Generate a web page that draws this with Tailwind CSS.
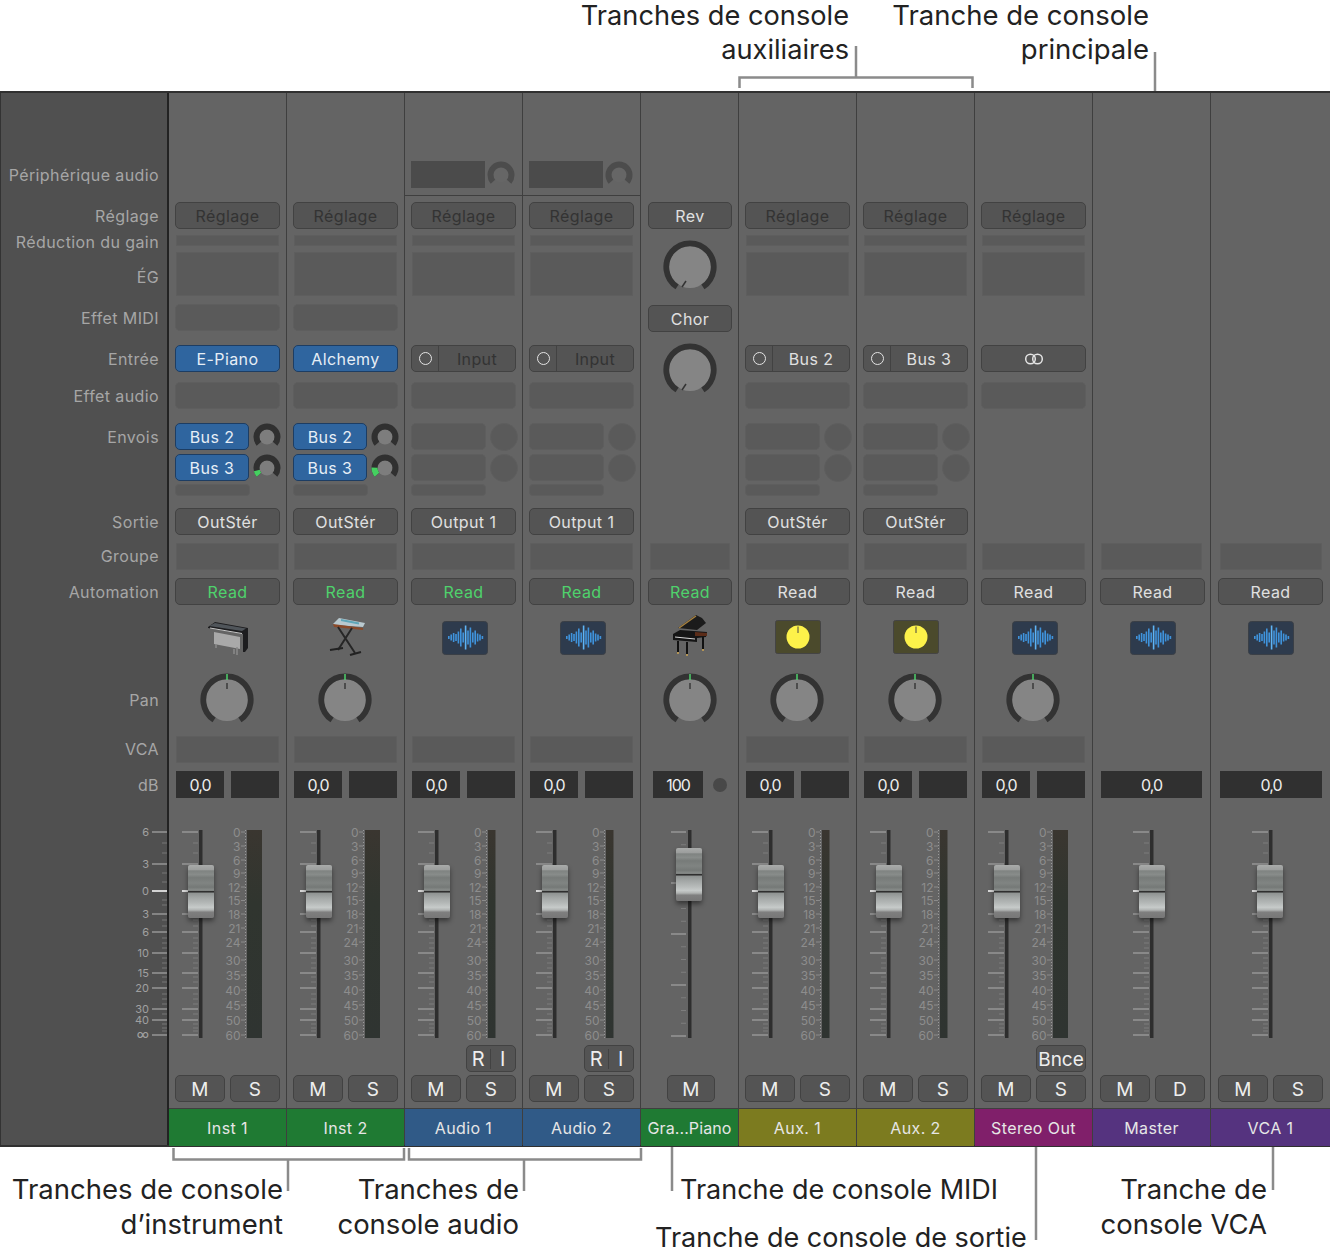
<!DOCTYPE html>
<html lang="fr">
<head>
  <meta charset="UTF-8">
  <title>Table de mixage</title>
  <script src="https://cdn.jsdelivr.net/npm/@tailwindcss/browser@4"></script>
</head>
<body class="bg-white font-[Inter,sans-serif] overflow-hidden">
<div class="relative w-[1330px] h-[1256px] overflow-hidden">

  <!-- Callouts above the mixer -->
  <div class="h-[91px]"></div>

  <!-- Mixer -->
  <div id="mixer" class="flex h-[1056px] bg-[#646464] border-t-2 border-b-2 border-[#303030] text-[16px] leading-none tracking-[0.4px]"></div>

  <!-- Callouts: text -->
  <p class="absolute right-[481px] top-[-1.5px] text-right text-[27.2px] leading-[34.5px] text-[#222]">Tranches de console<br>auxiliaires</p>
  <p class="absolute right-[181px] top-[-2.5px] text-right text-[27.5px] leading-[34.5px] text-[#222]">Tranche de console<br>principale</p>
  <p class="absolute right-[1047px] top-[1172px] text-right text-[27.5px] leading-[34.5px] text-[#222]">Tranches de console<br>d’instrument</p>
  <p class="absolute right-[811px] top-[1172px] text-right text-[27.5px] leading-[34.5px] text-[#222]">Tranches de<br>console audio</p>
  <p class="absolute left-[680px] top-[1173px] text-[27px] leading-[34.5px] text-[#222]">Tranche de console MIDI</p>
  <p class="absolute left-[655px] top-[1221px] text-[27px] leading-[34.5px] text-[#222]">Tranche de console de sortie</p>
  <p class="absolute right-[63px] top-[1172px] text-right text-[27.5px] leading-[34.5px] text-[#222]">Tranche de<br>console VCA</p>

  <!-- Callouts: leader lines -->
  <svg class="absolute left-0 top-0 pointer-events-none" width="1330" height="1256" fill="none" stroke="#8b8b8b" stroke-width="2.5">
    <path d="M739.5 88V77.5H972.5V88M856 77.5V46"/>
    <path d="M1155 52V91"/>
    <path d="M173.5 1148V1159.5H404V1148M288 1159.5V1191"/>
    <path d="M409 1148V1159.5H641V1148M524 1159.5V1191"/>
    <path d="M672 1147V1191"/>
    <path d="M1036 1147V1240"/>
    <path d="M1273 1147V1190"/>
  </svg>
</div>

<script>
  const ROWS = 'grid grid-rows-[109px_33px_17px_52px_41px_37px_41px_31px_30px_24px_35px_35px_37px_58px_63px_35px_59px_215px_30px_33px_38px]';
  const BTN = 'flex items-center justify-center h-[27px] rounded-[5px] bg-[#545454] border border-[#424242]';
  const BLUE = 'flex items-center justify-center h-[27px] rounded-[5px] bg-[#2f659f] border border-[#1d3d63] text-[#e6eef6]';
  const WELL = 'h-[27px] rounded-[1px] bg-[#5a5a5a] border border-[#5e5e5e]';
  const PAD = 'h-[27px] rounded-[5px] bg-[#5a5a5a] border border-[#5e5e5e]';
  const CAP = 'absolute w-[26px] h-[53px] rounded-[2px] shadow-[0_3px_5px_rgba(0,0,0,0.45)] bg-[linear-gradient(180deg,#a9abaa_0%,#9c9e9d_9%,#7f8381_11%,#888c8a_18%,#777b79_24%,#808482_34%,#757977_42%,#8a8e8c_48%,#2f2f2f_49%,#2f2f2f_51%,#8f9392_53%,#a3a7a6_62%,#b5b9b8_72%,#c6cac9_80%,#b0b3b2_85%,#7f7f7f_89%,#777_100%)]';

  const METER_TICKS = [['0',2],['3',16],['6',30],['9',43],['12',57],['15',70.5],['18',84],['21',98],['24',112],['30',130],['35',145],['40',160],['45',175],['50',190],['60',205]];
  const FADER_TICKS = [['6',2],['3',34],['0',61],['3',84],['6',102],['10',123],['15',143],['20',158],['30',179],['40',190],['∞',205]];
  const MINOR_TICKS = [13,23,43,52,70,75,90,96,108,113,118,128,133,138,147,152,164,169,174,184,194,198,201];

  function polar(cx, cy, r, deg) {
    const a = (deg - 90) * Math.PI / 180;
    return (cx + r * Math.cos(a)).toFixed(2) + ' ' + (cy + r * Math.sin(a)).toFixed(2);
  }
  function arc(cx, cy, r, from, to) {
    return 'M' + polar(cx, cy, r, from) + 'A' + r + ' ' + r + ' 0 ' + (to - from > 180 ? 1 : 0) + ' 1 ' + polar(cx, cy, r, to);
  }

  // big knob, tick is either on top (pan) or at the lower left (Rev, Chor)
  function bigKnob(low) {
    const tick = low
      ? '<path d="M19 47l4-6" stroke="#333" stroke-width="1.5"/>'
      : '<path d="M27 10V16" stroke="#3a3a3a" stroke-width="1.5"/><path d="M27 1V7" stroke="#4fd26c" stroke-width="1.5"/>';
    return `<svg width="54" height="54" fill="none"><circle cx="27" cy="27" r="21" fill="#858585"/><path d="${arc(27, 27, 23.7, -147, 147)}" stroke="#333" stroke-width="5.8"/>${tick}</svg>`;
  }

  function sendKnob(green) {
    const w = green ? `<path d="${arc(14, 14, 10.5, -130, -130 + green)}" stroke="#45d060" stroke-width="6"/>` : '';
    return `<svg width="28" height="28" fill="none" class="shrink-0"><circle cx="14" cy="14" r="7.5" fill="#7d7d7d"/><path d="${arc(14, 14, 10.5, -130, 130)}" stroke="#303030" stroke-width="6"/>${w}</svg>`;
  }

  function wave() {
    const bars = [1.5,3,4.5,3.5,6,9,5,12,7,10,5,7,4,3,1.5];
    const rects = bars.map((h, i) => `<rect x="${6 + i * 2.4}" y="${16.5 - h}" width="1.6" height="${h * 2}" fill="${i === 7 ? '#5fb4f5' : '#3f93dc'}"/>`).join('');
    return `<svg width="46" height="34" class="ml-[37px] mt-[6px]"><rect x=".5" y=".5" width="45" height="33" rx="3" fill="#2e3b4d" stroke="#3a3f46"/>${rects}</svg>`;
  }

  function yellow() {
    return `<svg width="46" height="34" class="ml-[36px] mt-[5px]"><rect x=".5" y=".5" width="45" height="33" rx="2" fill="#4b4a2c" stroke="#444"/><circle cx="23" cy="17" r="11.5" fill="#fdf24a"/><path d="M23 6.5V13" stroke="#444" stroke-width="1"/></svg>`;
  }

  const EPIANO = `<svg width="45" height="42" class="ml-[37px] mt-[4px] blur-[0.6px]" viewBox="0 0 45 42">
    <path d="M2 8L9 3L42 9V29L39 33H37V15L2 9Z" fill="#1d1d1f"/><path d="M3 7L9 4L40 9.500L36 12Z" fill="#50555a"/><path d="M4 9L36 14.500" stroke="#c8c8c8"/>
    <path d="M8 13L34 18V30L8 25Z" fill="#a9a9a9"/><path d="M10 25V29M31 28V36M28 30V35" stroke="#8b8b8b" stroke-width="1.500"/></svg>`;
  const SYNTH = `<svg width="45" height="44" class="ml-[36px] mt-[1px] blur-[0.6px]" viewBox="0 0 45 44">
    <path d="M10 8L16 2L42 7L40 11L12 9Z" fill="#b9c9cf"/><path d="M10 8L40 12V14L11 11Z" fill="#8a4a2a"/><path d="M18 4L36 7.500" stroke="#5fa6b8" stroke-width="2"/>
    <path d="M15 11L32 37M29 12L15 34" stroke="#262626" stroke-width="2"/><path d="M7 34L20 32M27 39L38 36" stroke="#222" stroke-width="2"/></svg>`;
  const GRAND = `<svg width="40" height="48" class="ml-[30px] mt-[-2px] blur-[0.6px]" viewBox="0 0 40 48">
    <path d="M7 15L25 2L31 5L35 10L26 17Z" fill="#1b1b1b"/><path d="M8 15L25 3" stroke="#a6813f" stroke-width="1.500"/>
    <path d="M2 21L9 17L36 19L35 24L26 25V29L2 27Z" fill="#151515"/><path d="M24 19L36 20V23H24Z" fill="#5b2c18"/><path d="M4 24L24 26" stroke="#d5d5d5"/>
    <path d="M7 28V39M16 29V41M32 24V36" stroke="#111" stroke-width="2"/><path d="M7 39V41M16 41V43M32 36V38" stroke="#b39455" stroke-width="2"/></svg>`;

  function fader(s) {
    let svg = '';
    if (s.kind === 'midi') {
      // the MIDI fader has an even scale
      for (let i = 0; i < 17; i++) {
        const y = 2 + i * 12.75;
        svg += i % 4 === 0
          ? `<path d="M${s.track - 17} ${y}h15" stroke="#969696" stroke-width="1.500"/>`
          : `<path d="M${s.track - 7} ${y}h5" stroke="#7d7d7d"/>`;
      }
    } else {
      MINOR_TICKS.forEach(y => { svg += `<path d="M${s.track - 6} ${y}h5" stroke="#7d7d7d"/>`; });
      FADER_TICKS.forEach(t => {
        svg += `<path d="M${s.track - 17} ${t[1]}h16" stroke="${t[0] === '0' ? '#fff' : '#969696'}" stroke-width="1.500"/>`;
      });
    }
    svg += `<rect x="${s.track}" y="0" width="3.500" height="208" fill="#2e2e2e"/>`;
    if (s.meter) {
      const x = s.meter === 'wide' ? 78 : 83;
      const w = s.meter === 'wide' ? 15 : 7.5;
      svg += `<defs><linearGradient id="meterFill" x1="0" y1="0" x2="0" y2="1"><stop offset="0" stop-color="#3a3630"/><stop offset=".35" stop-color="#30352f"/><stop offset="1" stop-color="#2f3431"/></linearGradient></defs>`;
      svg += `<rect x="${x}" y="0" width="${w}" height="208" fill="url(#meterFill)"/>`;
      svg += `<path d="M${x - 1.500} 0V208" stroke="#9a9a9a" stroke-dasharray="1 2"/>`;
      METER_TICKS.forEach(t => {
        svg += `<path d="M${x - 6} ${t[1]}h4" stroke="#8b8b8b"/><text x="${x - 6.5}" y="${t[1] + 4.5}" text-anchor="end" font-size="12" letter-spacing="0" fill="#8d8d8d">${t[0]}</text>`;
      });
    }
    return `<div class="relative">
      <svg width="117" height="215" fill="none" class="absolute left-0 top-0 overflow-visible">${svg}</svg>
      <div class="${CAP} ${s.cap}"></div>
    </div>`;
  }

  function inputBtn(label, tone) {
    return `<div class="${BTN} mx-[6px] justify-start">
      <span class="flex items-center justify-center w-[27px] h-full border-r border-[#424242] shrink-0"><span class="block w-[13px] h-[13px] rounded-full border-[1.5px] border-[#e4e4e4]"></span></span>
      <span class="flex-1 text-center ${tone}">${label}</span></div>`;
  }

  function sends(s, i) {
    if (s.send) {
      const green = i === 1 ? s.send : 0;
      return `<div class="flex items-start gap-[4px] ml-[6px]"><div class="${BLUE} w-[74px]">Bus ${i + 2}</div>${sendKnob(green)}</div>`;
    }
    return `<div class="flex items-start gap-[4px] ml-[6px]"><div class="${PAD} w-[75px]"></div><div class="w-[28px] h-[28px] rounded-full bg-[#5a5a5a] border border-[#5e5e5e] shrink-0"></div></div>`;
  }

  function strip(s) {
    const k = s.kind;
    const channel = ['inst', 'audio', 'aux', 'out'].includes(k);
    const blank = '<div></div>';
    const m = k === 'midi' ? 'ml-[7px] mr-[6px]' : k === 'master' ? 'ml-[7px] mr-[5px]' : k === 'vca' ? 'ml-[7px] mr-[7px]' : 'mx-[6px]';
    const well = k === 'midi' ? 'ml-[9px] mr-[8px]' : k === 'master' ? 'mx-[8px]' : k === 'vca' ? 'ml-[9px] mr-[8px]' : 'mx-[7px]';
    const read = `<div class="${BTN} ${m} ${s.green ? 'text-[#4fd26c]' : 'text-[#e0e0e0]'}">Read</div>`;
    const cells = [];

    // audio device
    cells.push(k === 'audio'
      ? `<div class="h-[103px] border-b border-[#3f3f3f] pt-[68px] pl-[6px] flex items-start gap-[2px]"><div class="w-[74px] h-[27px] bg-[#4b4b4b]"></div>
           <svg width="28" height="28" fill="none"><circle cx="14" cy="14" r="7.500" fill="#666"/><path d="${arc(14, 14, 10.5, -130, 130)}" stroke="#4c4c4c" stroke-width="6"/></svg></div>`
      : blank);

    // preset
    if (k === 'midi') cells.push(`<div class="${BTN} ${m} text-[#e0e0e0]">Rev</div>`);
    else cells.push(channel ? `<div class="${BTN} ${m} text-[#333]">Réglage</div>` : blank);

    // gain reduction + EQ
    if (k === 'midi') {
      cells.push(`<div class="row-span-2 ml-[22px] mt-[5px]">${bigKnob(true)}</div>`);
    } else {
      cells.push(channel ? '<div class="h-[11px] mx-[7px] bg-[#5a5a5a] border border-[#5e5e5e]"></div>' : blank);
      cells.push(channel ? '<div class="h-[44px] mx-[7px] bg-[#5a5a5a] border border-[#5e5e5e]"></div>' : blank);
    }

    // MIDI FX
    if (k === 'midi') cells.push(`<div class="${BTN} ${m} mt-[1px] text-[#e0e0e0]">Chor</div>`);
    else cells.push(k === 'inst' ? `<div class="${PAD} ${m}"></div>` : blank);

    // input
    if (k === 'midi') cells.push(`<div class="row-span-2 ml-[22px] -mt-[2px]">${bigKnob(true)}</div>`);
    else if (k === 'inst') cells.push(`<div class="${BLUE} ${m}">${s.input}</div>`);
    else if (k === 'audio') cells.push(inputBtn('Input', 'text-[#333]'));
    else if (k === 'aux') cells.push(inputBtn(s.input, 'text-[#e0e0e0]'));
    else if (k === 'out') cells.push(`<div class="${BTN} ${m}"><svg width="20" height="12" fill="none" stroke="#e4e4e4" stroke-width="1.500"><circle cx="6.500" cy="6" r="4.800"/><circle cx="13.500" cy="6" r="4.800"/></svg></div>`);
    else cells.push(blank);

    // audio FX
    if (k !== 'midi') cells.push(channel ? `<div class="${PAD} ${m}"></div>` : blank);

    // sends
    const hasSends = ['inst', 'audio', 'aux'].includes(k);
    cells.push(hasSends ? sends(s, 0) : blank);
    cells.push(hasSends ? sends(s, 1) : blank);
    cells.push(hasSends ? '<div class="h-[12px] w-[75px] ml-[6px] rounded-[4px] bg-[#5a5a5a] border border-[#5e5e5e]"></div>' : blank);

    // output
    cells.push(s.output ? `<div class="${BTN} ${m} text-[#e0e0e0]">${s.output}</div>` : blank);

    // group + automation
    cells.push(`<div class="${WELL} ${well}"></div>`);
    cells.push(read);

    // icon
    cells.push(s.icon);

    // pan (audio strips have none)
    cells.push(['inst', 'aux', 'out', 'midi'].includes(k) ? `<div class="${k === 'midi' ? 'ml-[22px]' : 'ml-[31px]'}">${bigKnob(false)}</div>` : blank);

    // VCA
    cells.push(channel ? `<div class="${WELL} mx-[7px]"></div>` : blank);

    // dB
    if (k === 'midi') {
      cells.push(`<div class="flex items-start ml-[12px]"><div class="w-[50px] h-[27px] bg-[#303030] flex items-center justify-center text-[#eee] tracking-[-1px]">100</div><span class="block w-[14px] h-[14px] ml-[10px] mt-[7px] rounded-full bg-[#484848]"></span></div>`);
    } else if (channel) {
      cells.push(`<div class="flex items-start gap-[7px] ml-[7px]"><div class="w-[48px] h-[27px] bg-[#303030] flex items-center justify-center text-[#eee] tracking-[-1px]">0,0</div><div class="w-[48px] h-[27px] bg-[#303030]"></div></div>`);
    } else {
      cells.push(`<div class="${well} h-[27px] bg-[#303030] flex items-center justify-center text-[#eee] tracking-[-1px]">0,0</div>`);
    }

    // fader + meter
    cells.push(fader(s));

    // record / bounce
    if (k === 'audio') cells.push(`<div class="${BTN} ml-[61px] mr-[6px] text-[#eee] text-[20px]"><span class="flex-1 text-center border-r border-[#424242]">R</span><span class="w-[24px] text-center">I</span></div>`);
    else if (k === 'out') cells.push(`<div class="${BTN} ml-[61px] mr-[6px] pt-[1px] text-[#eee] text-[19px] tracking-normal">Bnce</div>`);
    else cells.push(blank);

    // mute, solo
    const ms = k === 'midi'
      ? `<div class="${BTN} w-[48px] ml-[26px] pt-[2px] text-[19px] text-[#eee]">M</div>`
      : `<div class="flex items-start gap-[5px] ${m}"><div class="${BTN} flex-1 pt-[2px] text-[19px] text-[#eee]">M</div><div class="${BTN} flex-1 pt-[2px] text-[19px] text-[#eee]">${k === 'master' ? 'D' : 'S'}</div></div>`;
    cells.push(ms);

    // name
    cells.push(`<div class="flex items-center justify-center border-t border-[#3f3f3f] text-[#e6e6e6] ${s.color}">${s.name}</div>`);

    return `<div class="${ROWS} ${s.width} ${s.last ? '' : 'border-r border-[#3f3f3f]'}">${cells.join('')}</div>`;
  }

  const GREEN = 'bg-[#1f7a33]', NAVY = 'bg-[#305a87]', OLIVE = 'bg-[#7c7b1f]', PINK = 'bg-[#801f6a]', PURPLE = 'bg-[#55337f]';
  const STD = { track: 30, cap: 'left-[19px] top-[35px]' };

  const strips = [
    { ...STD, kind: 'inst', width: 'w-[118px]', name: 'Inst 1', color: GREEN, input: 'E-Piano', send: 26, green: true, output: 'OutStér', icon: EPIANO, meter: 'wide' },
    { ...STD, kind: 'inst', width: 'w-[118px]', name: 'Inst 2', color: GREEN, input: 'Alchemy', send: 42, green: true, output: 'OutStér', icon: SYNTH, meter: 'wide' },
    { ...STD, kind: 'audio', width: 'w-[118px]', name: 'Audio 1', color: NAVY, green: true, output: 'Output 1', icon: wave(), meter: 'narrow' },
    { ...STD, kind: 'audio', width: 'w-[118px]', name: 'Audio 2', color: NAVY, green: true, output: 'Output 1', icon: wave(), meter: 'narrow' },
    { kind: 'midi', width: 'w-[98px]', name: 'Gra...Piano', color: GREEN + ' tracking-[0.1px]', green: true, icon: GRAND, track: 47, cap: 'left-[35px] top-[18px]' },
    { ...STD, kind: 'aux', width: 'w-[118px]', name: 'Aux. 1', color: OLIVE, input: 'Bus 2', output: 'OutStér', icon: yellow(), meter: 'narrow' },
    { ...STD, kind: 'aux', width: 'w-[118px]', name: 'Aux. 2', color: OLIVE, input: 'Bus 3', output: 'OutStér', icon: yellow(), meter: 'narrow' },
    { ...STD, kind: 'out', width: 'w-[118px]', name: 'Stereo Out', color: PINK, icon: wave(), meter: 'wide' },
    { kind: 'master', width: 'w-[118px]', name: 'Master', color: PURPLE, icon: wave(), track: 57, cap: 'left-[46px] top-[35px]' },
    { kind: 'vca', width: 'w-[119px]', last: true, name: 'VCA 1', color: PURPLE, icon: wave(), track: 58, cap: 'left-[46px] top-[35px]' }
  ];

  function sidebar() {
    const label = (text, cls) => `<div class="flex items-center justify-end pr-[8px] ${cls}">${text}</div>`;
    let scale = '';
    MINOR_TICKS.forEach(y => { scale += `<path d="M${161} ${y}h5" stroke="#777"/>`; });
    FADER_TICKS.forEach(t => {
      scale += `<path d="M${151} ${t[1]}h15" stroke="${t[0] === '0' ? '#fff' : '#969696'}" stroke-width="1.500"/><text x="148" y="${t[1] + 4}" text-anchor="end" font-size="${t[0] === '∞' ? 13 : 11}" letter-spacing="0" fill="#a0a0a0">${t[0]}</text>`;
    });
    const cells = [
      label('Périphérique audio', 'h-[27px] mt-[68px]'),
      label('Réglage', 'h-[27px]'),
      label('Réduction du gain', 'h-[14px]'),
      label('ÉG', 'h-[50px]'),
      label('Effet MIDI', 'h-[27px]'),
      label('Entrée', 'h-[27px]'),
      label('Effet audio', 'h-[28px]'),
      label('Envois', 'h-[27px]'),
      '<div></div>', '<div></div>',
      label('Sortie', 'h-[27px]'),
      label('Groupe', 'h-[25px]'),
      label('Automation', 'h-[27px]'),
      '<div></div>',
      label('Pan', 'h-[54px]'),
      label('VCA', 'h-[26px]'),
      label('dB', 'h-[27px]'),
      `<div class="relative"><svg width="168" height="215" fill="none" class="absolute left-0 top-0 overflow-visible">${scale}</svg></div>`
    ];
    return `<div class="${ROWS} w-[169px] shrink-0 border-l border-r-2 border-l-[#333] border-r-[#222] bg-[#505050] text-[#a6a6a6]">${cells.join('')}</div>`;
  }

  document.getElementById('mixer').innerHTML = sidebar() + strips.map(strip).join('');
</script>
</body>
</html>
